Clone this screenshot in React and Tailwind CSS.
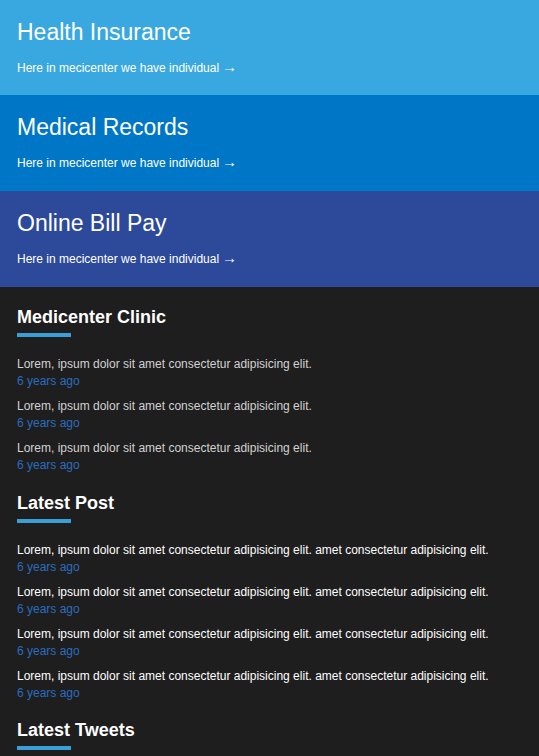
const bands = [
  { title: "Health Insurance", bg: "bg-[#3aa8e0]", h: "h-[95px]" },
  { title: "Medical Records", bg: "bg-[#0077c6]", h: "h-[96px]" },
  { title: "Online Bill Pay", bg: "bg-[#2d4a9a]", h: "h-[96px]" },
];

const clinic = Array(3).fill("Lorem, ipsum dolor sit amet consectetur adipisicing elit.");
const posts = Array(4).fill(
  "Lorem, ipsum dolor sit amet consectetur adipisicing elit. amet consectetur adipisicing elit."
);

function Band({ title, bg, h }) {
  return (
    <div className={`${bg} ${h} px-[17px] pt-[18px] text-white`}>
      <h2 className="text-[23px] leading-[28px]">{title}</h2>
      <p className="mt-[14px] text-[12px] leading-[17px]">
        Here in mecicenter we have individual
        <span className="ml-[3px] align-[0px] text-[15px] leading-[0]">→</span>
      </p>
    </div>
  );
}

function Section({ title, items, textColor, className = "" }) {
  return (
    <div className={className}>
      <h3 className="text-[18px] font-bold leading-[22px] text-white">{title}</h3>
      <div className="mt-[5px] h-1 w-[54px] bg-[#3a9fd6]" />
      {items && (
        <ul className="mt-[19px] flex flex-col gap-2">
          {items.map((t, i) => (
            <li key={i} className="text-[12px] leading-[17px]">
              <p className={textColor}>{t}</p>
              <p className="text-[#2b6cbf]">6 years ago</p>
            </li>
          ))}
        </ul>
      )}
    </div>
  );
}

export default function App() {
  return (
    <div className="min-h-[756px] bg-[#1e1e1e] font-['Liberation_Sans',Arial,sans-serif]">
      {bands.map((b) => (
        <Band key={b.title} {...b} />
      ))}
      <div className="flex flex-col px-[17px] pt-[19px] pb-6">
        <Section title="Medicenter Clinic" items={clinic} textColor="text-[#d2d2d2]" />
        <Section className="mt-[18px]" title="Latest Post" items={posts} textColor="text-white" />
        <Section className="mt-[17px]" title="Latest Tweets" />
      </div>
    </div>
  );
}
